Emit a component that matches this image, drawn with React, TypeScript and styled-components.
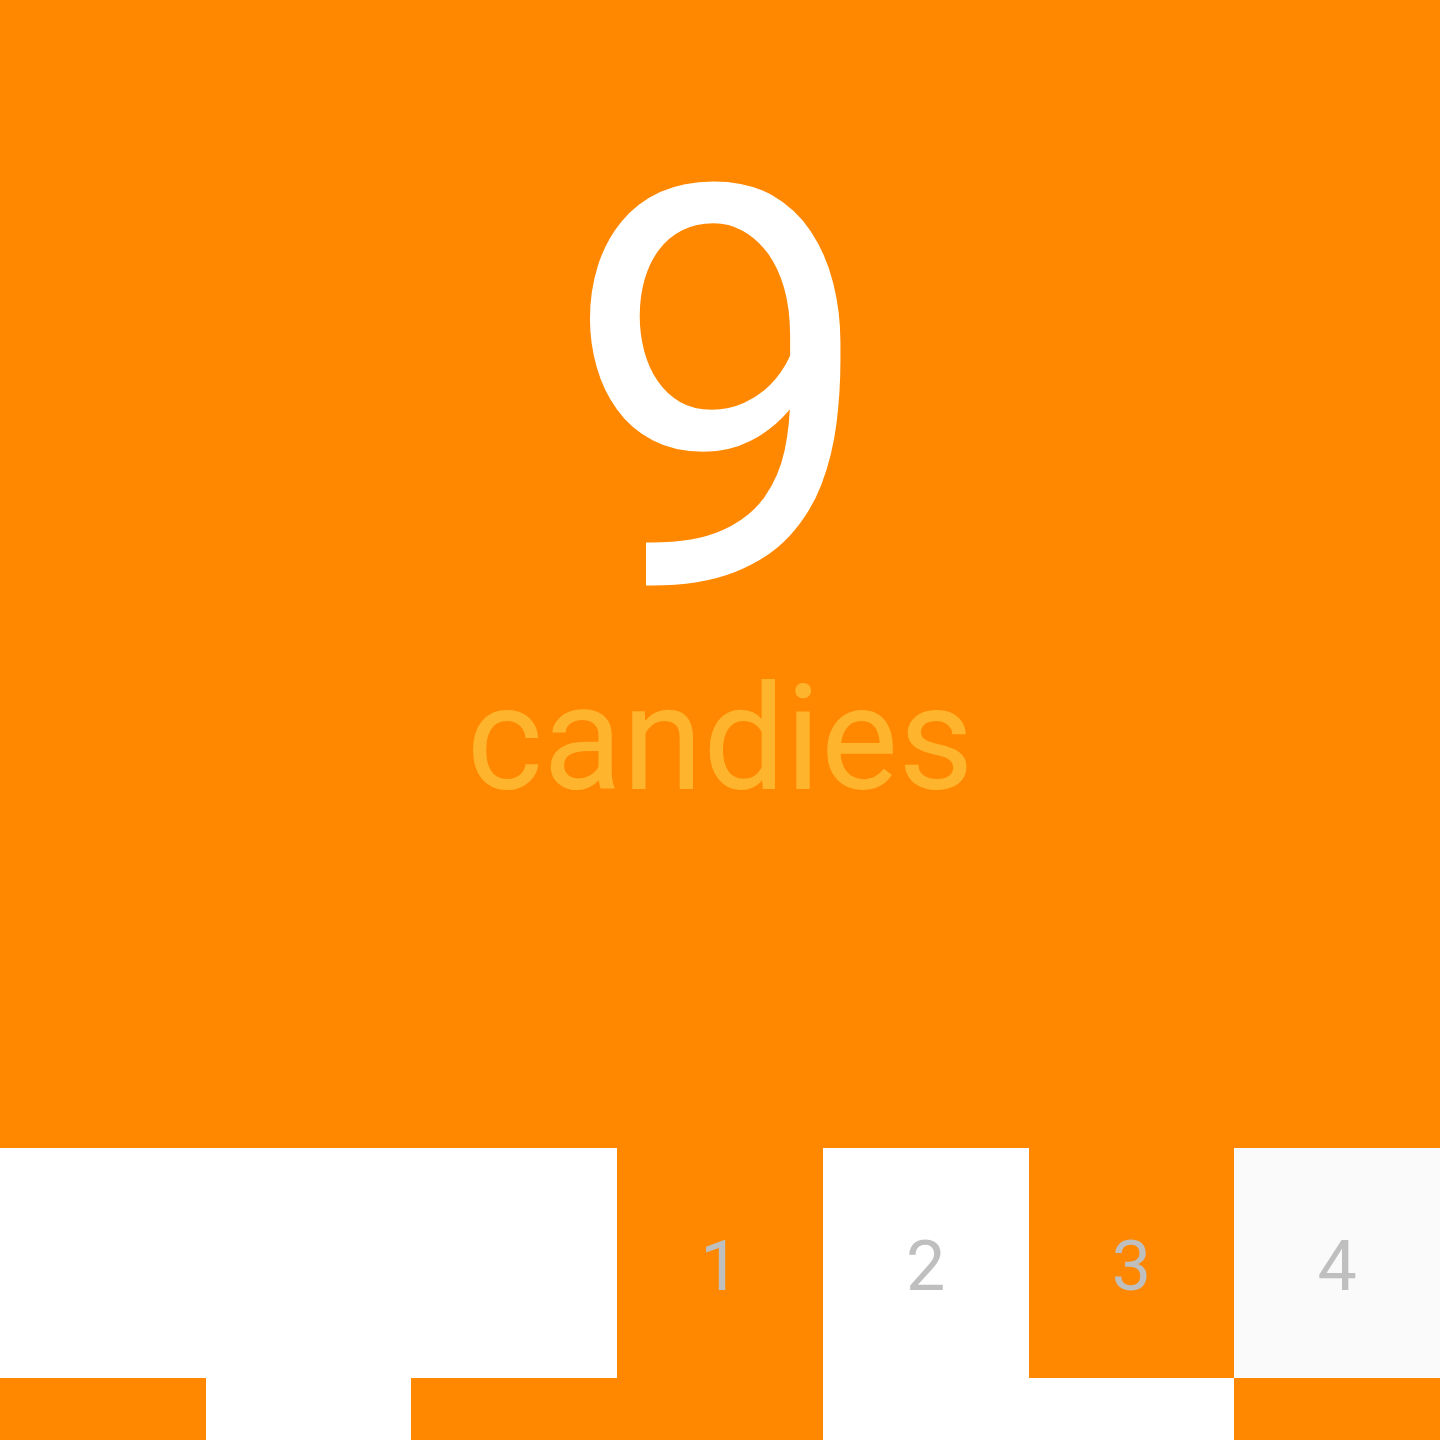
import React from "react";
import styled, { createGlobalStyle } from "styled-components";

const Global = createGlobalStyle`
  html, body { margin: 0; padding: 0; background: #ffffff; }
  body { font-family: Roboto, "Liberation Sans", sans-serif; }
`;

const Page = styled.div`
  width: 1440px;
`;

const Hero = styled.section`
  height: 1148px;
  box-sizing: border-box;
  background: #ff8800;
  display: flex;
  flex-direction: column;
  align-items: center;
  padding-top: 124px;
`;

const Count = styled.div`
  font-size: 560px;
  line-height: 540px;
  color: #ffffff;
  font-weight: 400;
`;

const Label = styled.div`
  margin-top: 3px;
  font-size: 146px;
  line-height: 146px;
  color: #ffb42e;
  font-weight: 400;
`;

const Grid = styled.div`
  display: grid;
  grid-template-columns: repeat(7, 1fr);
  grid-auto-rows: 230px;
`;

type Tone = "white" | "orange" | "light";

const Cell = styled.div<{ $tone: Tone }>`
  display: flex;
  align-items: center;
  justify-content: center;
  box-sizing: border-box;
  padding-top: 6px;
  background: ${(p) =>
    p.$tone === "orange" ? "#ff8800" : p.$tone === "light" ? "#fafafa" : "#ffffff"};
  color: #bfbfbf;
  font-size: 70px;
  line-height: 1;
`;

const cells: { tone: Tone; text?: string }[] = [
  { tone: "white" },
  { tone: "white" },
  { tone: "white" },
  { tone: "orange", text: "1" },
  { tone: "white", text: "2" },
  { tone: "orange", text: "3" },
  { tone: "light", text: "4" },
  { tone: "orange" },
  { tone: "white" },
  { tone: "orange" },
  { tone: "orange" },
  { tone: "white" },
  { tone: "white" },
  { tone: "orange" },
];

export default function App() {
  return (
    <Page>
      <Global />
      <Hero>
        <Count>9</Count>
        <Label>candies</Label>
      </Hero>
      <Grid>
        {cells.map((c, i) => (
          <Cell key={i} $tone={c.tone}>
            {c.text}
          </Cell>
        ))}
      </Grid>
    </Page>
  );
}
